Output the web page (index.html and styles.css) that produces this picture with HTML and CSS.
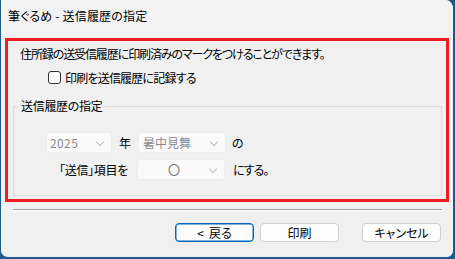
FILE: index.html
```html
<!DOCTYPE html>
<html lang="ja">
<head>
	<meta charset="UTF-8">
	<title>筆ぐるめ - 送信履歴の指定</title>
	<link rel="stylesheet" href="styles.css">
</head>
<body>
	<div class="window">
		<div class="titlebar">筆ぐるめ - 送信履歴の指定</div>
		<div class="content">
			<div class="mark">
				<p class="intro">住所録の送受信履歴に印刷済みのマークをつけることができます。</p>
				<label class="check"><span class="box"></span>印刷を送信履歴に記録する</label>
				<fieldset class="group">
					<legend>送信履歴の指定</legend>
					<div class="row">
						<span class="combo small">2025<i></i></span>
						<span class="unit">年</span>
						<span class="combo">暑中見舞<i></i></span>
						<span class="after">の</span>
					</div>
					<div class="row">
						<span class="label">「送信」項目を</span>
						<span class="combo center">〇<i></i></span>
						<span class="after2">にする。</span>
					</div>
				</fieldset>
			</div>
			<div class="sep"></div>
			<div class="buttons">
				<a class="btn default" href="javascript:;"><span class="lt">&lt;</span>戻る</a>
				<a class="btn" href="javascript:;">印刷</a>
				<a class="btn cancel" href="javascript:;">キャンセル</a>
			</div>
		</div>
	</div>
</body>
</html>
```

FILE: styles.css
```css
*{ margin:0; padding:0; box-sizing:border-box; }
a{ text-decoration:none; color:#000; }
body{ width:455px; height:259px; background:#1e5a8c; font-family:"Noto Sans CJK JP", sans-serif; font-size:12px; color:#000; font-feature-settings:"palt"; overflow:hidden; }

.window{ width:455px; height:259px; background:#f0f0f0; border:2px solid #1e5a8c; border-top:none; border-left-width:1px; border-radius:0 9px 8px 8px; overflow:hidden; display:flex; flex-direction:column; }
.titlebar{ height:32px; background:#f3f3f3; padding-left:7px; line-height:31px; font-size:12px; letter-spacing:0.2px; }

.content{ flex:1; padding:6px 0 0 4px; display:flex; flex-direction:column; }
.mark{ width:444px; height:164px; border:3px solid #ec1c24; padding:4px 0 0 0; display:flex; flex-direction:column; }
.intro{ padding-left:12px; line-height:18px; height:18px; letter-spacing:-1.1px; }

.check{ display:flex; align-items:center; height:20px; margin:4px 0 0 40px; letter-spacing:-0.8px; }
.check .box{ width:13px; height:13px; border:1px solid #333; border-radius:3px; background:#fbfbfb; margin-right:4px; }

.group{ margin:11px 0 0 5px; width:429px; height:98px; border:1px solid #dcdcdc; border-radius:0; padding:0; }
.group legend{ margin-left:4px; padding:0 3px 0 3px; line-height:16px; font-size:12px; letter-spacing:-0.3px; }
.row{ display:flex; align-items:center; height:21px; margin-left:32px; }
.row + .row{ margin-top:6px; margin-left:0; }
.group .row:first-of-type{ margin-top:18px; }

.combo{ position:relative; width:88px; height:21px; background:#fafafa; border:1px solid #ededed; border-radius:3px; color:#8a8a8a; line-height:19px; padding-left:4px; }
.combo.small{ width:66px; padding-left:3px; letter-spacing:0.4px; }
.combo.center{ text-align:center; padding:0 14px 0 0; color:#6a6a6a; }
.combo i{ position:absolute; right:8px; top:6px; width:6px; height:6px; border-right:1px solid #c0c0c0; border-bottom:1px solid #c0c0c0; transform:rotate(45deg); }
.unit{ width:26px; text-align:center; }
.after{ margin-left:6px; }
.label{ width:123px; text-align:right; padding-right:9px; letter-spacing:-0.3px; }
.after2{ margin-left:8px; letter-spacing:-1px; }

.sep{ margin:7px 0 0 8px; width:429px; height:2px; border-top:1px solid #a0a0a0; border-bottom:1px solid #fff; }

.buttons{ display:flex; margin:12px 0 0 170px; }
.btn{ width:79px; height:19px; line-height:17px; text-align:center; background:#fdfdfd; border:1px solid #d0d0d0; border-radius:4px; margin-right:6px; }
.btn .lt{ margin-right:5px; }
.btn.default{ border:1px solid #0067c0; box-shadow:inset 0 0 0 0.5px #0067c0; }
.btn.cancel{ margin-left:17px; }
```
